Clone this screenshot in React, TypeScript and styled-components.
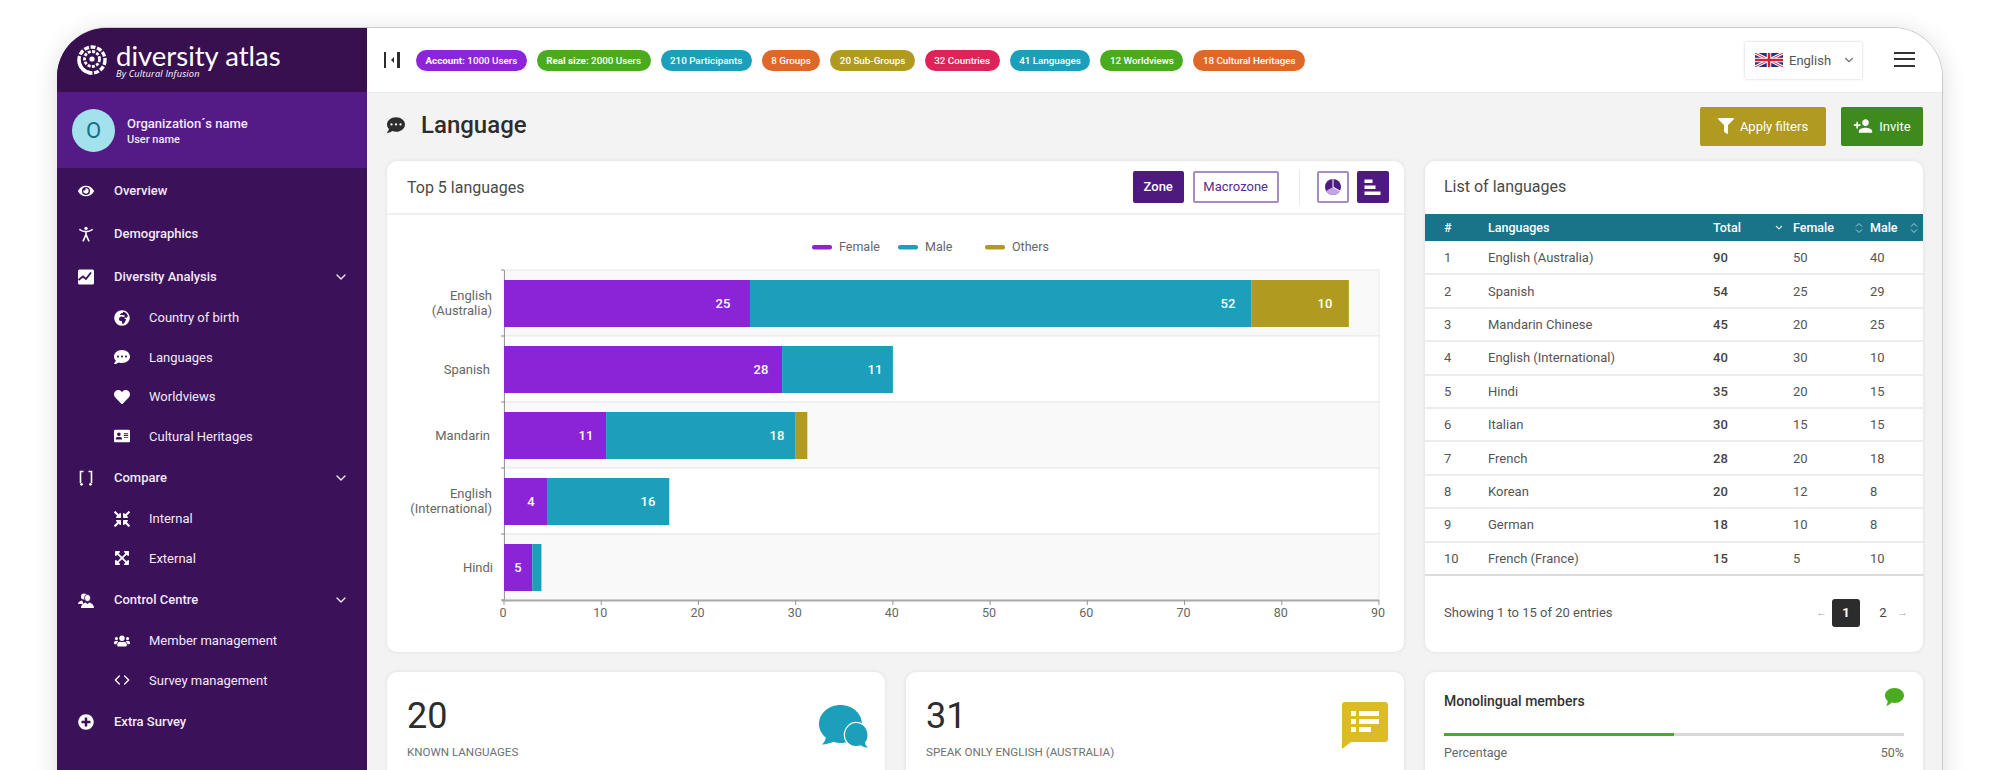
import React from 'react';
import styled, {createGlobalStyle} from 'styled-components';
import {
    FaEye, FaGlobeAfrica, FaCommentDots, FaHeart, FaAddressCard, FaCompressArrowsAlt,
    FaExpandArrowsAlt, FaUsers, FaPlusCircle, FaFilter,
} from 'react-icons/fa';
import {FiChevronDown, FiCode} from 'react-icons/fi';
import {MdPersonAdd} from 'react-icons/md';

const GlobalStyle = createGlobalStyle`
  html, body {
    margin: 0;
    height: 770px;
    overflow: hidden;
    background: #fff;
    font-family: Roboto, "Liberation Sans", sans-serif;
  }
`;

const Page = styled.div`
  height: 770px;
  overflow: hidden;
  padding: 27px 57px 0;
  box-sizing: border-box;
`;

const Frame = styled.div`
  display: flex;
  height: 800px;
  border: 1px solid #c9c9c9;
  border-left: 0;
  border-radius: 50px 50px 0 0;
  overflow: hidden;
  box-shadow: 0 4px 24px rgba(0, 0, 0, 0.14);
`;

const Sidebar = styled.aside`
  width: 310px;
  flex: none;
  background: #3b1159;
  color: #f3e9f8;
`;

const LogoBar = styled.div`
  height: 64px;
  display: flex;
  align-items: center;
  gap: 9px;
  padding-left: 20px;
  background: #38104f;
`;

const LogoText = styled.div`
  color: #fff;
  font-family: Lato, sans-serif;
  font-size: 27.5px;
  line-height: 27px;
  margin-top: 1px;

  small {
    display: block;
    font-family: "Open Sans", sans-serif;
    font-size: 9.2px;
    line-height: 10px;
    font-style: italic;
    letter-spacing: 0.2px;
  }
`;

const OrgBand = styled.div`
  height: 76px;
  display: flex;
  align-items: center;
  gap: 12px;
  padding-left: 15px;
  background: #541a85;
`;

const Avatar = styled.div`
  width: 43px;
  height: 43px;
  border-radius: 50%;
  background: #a3e1ec;
  color: #17707f;
  font-size: 22px;
  display: flex;
  align-items: center;
  justify-content: center;
`;

const OrgInfo = styled.div`
  margin-top: 3px;
`;

const OrgName = styled.div`
  font-size: 13px;
  font-weight: 500;
  line-height: 16px;
`;

const OrgUser = styled.div`
  font-size: 11px;
  font-weight: 500;
  line-height: 16px;
`;

const NavList = styled.nav`
  padding-top: 1px;
`;

const NavRow = styled.div<{ $sub?: boolean }>`
  height: ${props => props.$sub ? '39.5px' : '43px'};
  display: flex;
  align-items: center;
  padding-left: ${props => props.$sub ? '57px' : '21px'};
  font-size: 13px;
  font-weight: ${props => props.$sub ? 400 : 500};

  & > svg:first-child {
    width: 16px;
    height: 16px;
    margin-right: ${props => props.$sub ? '19px' : '20px'};
    color: #fff;
    flex: none;
  }
`;

const NavChevron = styled(FiChevronDown)`
  margin-left: auto;
  margin-right: 18px;
  width: 16px;
  height: 16px;
`;

const Main = styled.main`
  flex: 1;
  background: #f3f3f3;
  min-width: 0;
`;

const TopBar = styled.header`
  height: 64px;
  background: #fff;
  border-bottom: 1px solid #ebebeb;
  display: flex;
  align-items: center;
  padding-left: 17px;
`;

const Pills = styled.div`
  display: flex;
  gap: 10px;
  margin-left: 16px;
`;

const Pill = styled.span<{ $color: string }>`
  height: 21px;
  line-height: 21px;
  padding: 0 9.5px;
  border-radius: 11px;
  background: ${props => props.$color};
  color: #fff;
  font-size: 9.8px;
  font-weight: 500;
  white-space: nowrap;

  b {
    font-weight: 700;
  }
`;

const LangSelect = styled.div`
  margin-left: auto;
  width: 119px;
  height: 39px;
  box-sizing: border-box;
  border: 1px solid #ececec;
  border-radius: 3px;
  box-shadow: 0 0 3px rgba(0, 0, 0, 0.06);
  display: flex;
  align-items: center;
  gap: 6px;
  padding-left: 10px;
  font-size: 13px;
  color: #555;

  svg:last-child {
    margin-left: 5px;
    color: #777;
  }
`;

const Burger = styled.div`
  width: 21px;
  height: 15px;
  margin: 0 27px 2px 31px;
  border-top: 2px solid #333;
  border-bottom: 2px solid #333;
  box-sizing: border-box;
  position: relative;

  &::after {
    content: '';
    position: absolute;
    left: 0;
    right: 0;
    top: 4.5px;
    height: 2px;
    background: #333;
  }
`;

const Content = styled.div`
  padding: 0 19px 0 20px;
`;

const TitleRow = styled.div`
  height: 66px;
  padding-bottom: 2px;
  display: flex;
  align-items: center;
  gap: 15px;
`;

const PageTitle = styled.h1`
  flex: 1;
  display: flex;
  align-items: center;
  gap: 16px;
  margin: 0 0 2px;
  font-size: 24px;
  font-weight: 500;
  color: #2d2d2d;

  svg {
    width: 18px;
    height: 18px;
  }
`;

const ActionButton = styled.button<{ $color: string; $width: number }>`
  width: ${props => props.$width}px;
  height: 39px;
  border: 0;
  border-radius: 2px;
  background: ${props => props.$color};
  color: #fff;
  font-family: inherit;
  font-size: 13px;
  font-weight: 400;
  display: flex;
  align-items: center;
  justify-content: center;
  gap: 6px;
  padding: 0;
`;

const Grid = styled.div`
  display: grid;
  grid-template-columns: repeat(3, 1fr);
  column-gap: 21px;
  row-gap: 20px;
`;

const Card = styled.section<{ $wide?: boolean }>`
  grid-column: ${props => props.$wide ? 'span 2' : 'span 1'};
  background: #fff;
  border-radius: 10px;
  box-shadow: 0 0 4px rgba(0, 0, 0, 0.09);
  overflow: hidden;
`;

const TallCard = styled(Card)`
  height: 491px;
`;

const CardHead = styled.div`
  height: 52px;
  display: flex;
  align-items: center;
  padding: 0 15.5px 0 20px;
  border-bottom: 2px solid #f0f0f0;
  font-size: 16px;
  color: #4a4a4a;
`;

const CardTitle = styled.div`
  flex: 1;
`;

const ZoneButton = styled.div<{ $active?: boolean }>`
  height: 32px;
  line-height: 28px;
  box-sizing: border-box;
  padding: 0 ${props => props.$active ? '9px' : '8.5px'};
  margin-left: ${props => props.$active ? '0' : '9px'};
  border: 2px solid ${props => props.$active ? '#4f1a80' : '#a78cc2'};
  border-radius: 2px;
  background: ${props => props.$active ? '#4f1a80' : '#fff'};
  color: ${props => props.$active ? '#fff' : '#5a2a8a'};
  font-size: 13px;
  font-weight: ${props => props.$active ? 500 : 400};
`;

const HeadDivider = styled.div`
  width: 1px;
  height: 36px;
  background: #ececec;
  margin: 0 17px 0 20px;
`;

const IconButton = styled.div<{ $active?: boolean }>`
  width: 32px;
  height: 32px;
  margin-left: ${props => props.$active ? '8px' : '0'};
  box-sizing: border-box;
  border: 2px solid ${props => props.$active ? '#4f1a80' : '#a78cc2'};
  border-radius: 2px;
  background: ${props => props.$active ? '#4f1a80' : '#fff'};
  display: flex;
  align-items: center;
  justify-content: center;
`;

const ChartSvg = styled.svg`
  display: block;
  font-family: Roboto, sans-serif;
`;

const ListTitle = styled.div`
  height: 53px;
  line-height: 52px;
  padding-left: 19px;
  font-size: 16px;
  color: #4a4a4a;
`;

const Table = styled.table`
  width: 100%;
  table-layout: fixed;
  border-collapse: collapse;
  font-size: 13px;
  color: #555;
`;

const HeadCell = styled.th<{ $width: number }>`
  width: ${props => props.$width}px;
  height: 27px;
  padding: 0;
  background: #19748a;
  color: #fff;
  font-weight: 500;
  font-size: 12.5px;
  text-align: left;

  &:first-child {
    padding-left: 19px;
  }
`;

const HeadInner = styled.div<{ $pad: number }>`
  display: flex;
  align-items: center;
  justify-content: space-between;
  padding-right: ${props => props.$pad}px;
`;

const Row = styled.tr`
  height: 33.4px;
  border-bottom: 2px solid #ececec;

  td {
    padding: 0;
  }

  td:first-child {
    padding-left: 19px;
  }

  &:last-child {
    border-bottom-color: #dcdcdc;
  }
`;

const TotalCell = styled.td`
  font-weight: 500;
  color: #444;
`;

const TableFoot = styled.div`
  display: flex;
  align-items: center;
  padding: 23px 15px 0 19px;
  font-size: 13px;
  color: #555;
`;

const Pager = styled.div`
  margin-left: auto;
  display: flex;
  align-items: center;
  color: #aaa;
  font-size: 11px;
`;

const PageNum = styled.div<{ $active?: boolean }>`
  width: 28px;
  height: 28px;
  line-height: 28px;
  text-align: center;
  border-radius: 3px;
  margin: 0 ${props => props.$active ? '9px' : '0'} 0 ${props => props.$active ? '5px' : '0'};
  background: ${props => props.$active ? '#2c2c2c' : 'transparent'};
  color: ${props => props.$active ? '#fff' : '#444'};
  font-size: 13px;
  font-weight: ${props => props.$active ? 700 : 400};
`;

const StatCard = styled(Card)`
  height: 130px;
  display: flex;
  justify-content: space-between;
  padding: 21px 16px 0 20px;
  box-sizing: border-box;
`;

const StatValue = styled.div`
  font-size: 36px;
  line-height: 46px;
  color: #2d2d2d;
`;

const StatLabel = styled.div`
  margin-top: 6px;
  font-size: 11.6px;
  line-height: 14px;
  color: #707070;
  text-transform: uppercase;
`;

const StatIcon = styled.div<{ $top: number }>`
  margin-top: ${props => props.$top}px;
`;

const MonoCard = styled(Card)`
  height: 130px;
  padding: 16px 19px 0 19px;
  box-sizing: border-box;
`;

const MonoHead = styled.div`
  height: 32px;
  display: flex;
  justify-content: space-between;
  align-items: flex-start;
  font-size: 14px;
  font-weight: 500;
  line-height: 26px;
  color: #333;
`;

const Track = styled.div`
  margin-top: 13px;
  height: 3px;
  background: #d9d9d9;
`;

const TrackFill = styled.div<{ $value: number }>`
  width: ${props => props.$value}%;
  height: 100%;
  background: #4bab1e;
`;

const MonoMeta = styled.div`
  display: flex;
  justify-content: space-between;
  margin-top: 9px;
  font-size: 12.5px;
  color: #666;
`;

const pills = [
    {color: '#8e24d8', bold: 'Account:', text: ' 1000 Users'},
    {color: '#4bab1e', bold: 'Real size:', text: ' 2000 Users'},
    {color: '#1b9fba', text: '210 Participants'},
    {color: '#e0672a', text: '8 Groups'},
    {color: '#b09a1f', text: '20 Sub-Groups'},
    {color: '#dd2459', text: '32 Countries'},
    {color: '#1b9fba', text: '41 Languages'},
    {color: '#4bab1e', text: '12 Worldviews'},
    {color: '#e0672a', text: '18 Cultural Heritages'},
];

const languages = [
    ['English (Australia)', 90, 50, 40],
    ['Spanish', 54, 25, 29],
    ['Mandarin Chinese', 45, 20, 25],
    ['English (International)', 40, 30, 10],
    ['Hindi', 35, 20, 15],
    ['Italian', 30, 15, 15],
    ['French', 28, 20, 18],
    ['Korean', 20, 12, 8],
    ['German', 18, 10, 8],
    ['French (France)', 15, 5, 10],
];

const PURPLE = '#8b24d6';
const TEAL = '#1b9fba';
const GOLD = '#b09a1f';
const UNIT = 875 / 90;
const toX = (v: number) => 504 + v * UNIT;

// [end value, colour, label, label centre]
const bars: { top: number; parts: [number, string, string, number][] }[] = [
    {top: 280, parts: [[25.3, PURPLE, '25', 723], [76.9, TEAL, '52', 1228], [86.9, GOLD, '10', 1325]]},
    {top: 346, parts: [[28.6, PURPLE, '28', 761], [40, TEAL, '11', 875]]},
    {top: 412, parts: [[10.5, PURPLE, '11', 586], [30, TEAL, '18', 777], [31.2, GOLD, '', 0]]},
    {top: 478, parts: [[4.5, PURPLE, '4', 531], [17, TEAL, '16', 648]]},
    {top: 544, parts: [[2.9, PURPLE, '5', 518], [3.85, TEAL, '', 0]]},
];

const yLabels: [string, number, number][] = [
    ['English', 492, 300], ['(Australia)', 492, 315], ['Spanish', 490, 374], ['Mandarin', 490, 440],
    ['English', 492, 498], ['(International)', 492, 513], ['Hindi', 493, 572],
];

const legend: [string, string, number, number][] = [
    ['Female', PURPLE, 812, 839],
    ['Male', TEAL, 898, 925],
    ['Others', GOLD, 985, 1012],
];

const Chart = () => (
    <ChartSvg width="1017" height="437" viewBox="387 215 1017 437">
        {legend.map(([name, color, x, tx]) => (
            <g key={name}>
                <rect x={x} y={245} width={20} height={4.5} rx={2} fill={color} />
                <text x={tx} y={251} fontSize="12.5" fill="#666">{name}</text>
            </g>
        ))}
        {[0, 1, 2, 3, 4].map(i => (
            <rect key={i} x={504} y={270 + i * 66} width={875} height={66}
                  fill={i % 2 ? '#fff' : '#f9f9f9'} stroke="#e8e8e8" />
        ))}
        {[0, 1, 2, 3, 4, 5].map(i => (
            <line key={i} x1={501} x2={504} y1={270 + i * 66} y2={270 + i * 66} stroke="#888" />
        ))}
        <line x1={504.5} x2={504.5} y1={270} y2={601} stroke="#999" />
        <line x1={502} x2={1379} y1={600.5} y2={600.5} stroke="#aaa" strokeWidth="2" />
        {[0, 10, 20, 30, 40, 50, 60, 70, 80, 90].map(v => (
            <g key={v}>
                <line x1={toX(v)} x2={toX(v)} y1={600} y2={605} stroke="#999" />
                <text x={toX(v) - 1} y={617} fontSize="12.5" fill="#666" textAnchor="middle">{v}</text>
            </g>
        ))}
        {yLabels.map(([text, x, y]) => (
            <text key={text + y} x={x} y={y} fontSize="13" fill="#666" textAnchor="end">{text}</text>
        ))}
        {bars.map(bar => bar.parts.map(([end, color, label, cx], i) => {
            const from = i ? bar.parts[i - 1][0] : 0;
            return (
                <g key={color}>
                    <rect x={toX(from)} y={bar.top} width={(end - from) * UNIT} height={47} fill={color} />
                    {label && <text x={cx} y={bar.top + 28} fontSize="13" fontWeight="500" fill="#fff"
                                    textAnchor="middle">{label}</text>}
                </g>
            );
        }))}
    </ChartSvg>
);

const Logo = () => (
    <svg width="30" height="30" viewBox="0 0 30 30" fill="none" stroke="#fff">
        <circle cx="15" cy="15" r="13" strokeWidth="3.4" strokeDasharray="5 1.6" />
        <path d="M2 15a13 13 0 0 0 12 13" strokeWidth="3.4" />
        <circle cx="15" cy="14" r="7.5" strokeWidth="2.8" strokeDasharray="3 1.4" />
        <circle cx="15" cy="14" r="2.6" fill="#fff" stroke="none" />
    </svg>
);

const ChartBoxIcon = () => (
    <svg viewBox="0 0 16 16">
        <rect x="0" y="0.500" width="16" height="15" rx="1.5" fill="#fff" />
        <path d="M0.500 11l4.500-3.500 3 2.500L13 3.500" fill="none" stroke="#3b1159" strokeWidth="1.8" />
    </svg>
);

const PersonIcon = () => (
    <svg viewBox="0 0 24 24" fill="none" stroke="#fff" strokeWidth="2.4">
        <circle cx="12" cy="3.5" r="2.5" fill="#fff" stroke="none" />
        <path d="M2 5c4 3 6 3.500 10 3.500S18 8 22 5M12 8.500V13M12 13l-4.500 10M12 13l4.500 10" />
    </svg>
);

const CompareIcon = () => (
    <svg viewBox="0 0 16 16" fill="none" stroke="#fff" strokeWidth="1.6">
        <path d="M5.500 1.500H2.500V13M10.500 1.500h3V13" />
        <circle cx="3.500" cy="14.300" r="1.400" fill="#fff" stroke="none" />
        <circle cx="12.500" cy="14.300" r="1.400" fill="#fff" stroke="none" />
    </svg>
);

const BustsIcon = () => (
    <svg viewBox="0 0 16 16" fill="#fff">
        <circle cx="6" cy="4.500" r="3" />
        <path d="M0 12c0-2 2-3 4-3.500l1 1.500v2z" />
        <ellipse cx="9.500" cy="6" rx="3" ry="3.600" stroke="#3b1159" strokeWidth="0.8" />
        <path d="M3 16c0-3 2.500-5 4.500-5.500l2 1.500 2-1.500c2 .5 4.500 2.500 4.500 5.500z" />
    </svg>
);

const Flag = () => (
    <svg width="28" height="14" viewBox="0 0 28 14">
        <rect width="28" height="14" fill="#23317d" />
        <path d="M0 0l28 14M28 0L0 14" stroke="#fff" strokeWidth="3" />
        <path d="M0 0l28 14M28 0L0 14" stroke="#d41f3c" strokeWidth="1" />
        <path d="M14 0v14M0 7h28" stroke="#fff" strokeWidth="4.500" />
        <path d="M14 0v14M0 7h28" stroke="#d41f3c" strokeWidth="2.500" />
    </svg>
);

const SidebarToggle = () => (
    <svg width="16" height="16" viewBox="0 0 16 16" fill="#2d2d2d">
        <rect x="0" y="0" width="2" height="16" />
        <rect x="13" y="0" width="3" height="16" />
        <path d="M10 5v6L7 8z" />
    </svg>
);

const PieIcon = () => (
    <svg width="18" height="18" viewBox="0 0 18 18">
        <circle cx="9" cy="9" r="8" fill="#4f1a80" />
        <path d="M9 9l6.900 4A8 8 0 0 1 2 13z" fill="#c3a5e4" />
        <path d="M9 1v8l6.900 4" fill="none" stroke="#fff" strokeWidth="1" />
    </svg>
);

const BarsIcon = () => (
    <svg width="17" height="17" viewBox="0 0 17 17" fill="#fff">
        <rect x="0.500" y="0.500" width="8" height="3.500" />
        <rect x="0.500" y="6.500" width="11" height="3.500" />
        <rect x="0.500" y="12.500" width="16" height="3.500" />
    </svg>
);

const SortCaret = () => (
    <svg width="8" height="12" viewBox="0 0 8 12" fill="none" stroke="#9fd0da" strokeWidth="1">
        <path d="M1 4.500l3-3 3 3M1 7.500l3 3 3-3" />
    </svg>
);

const SortDown = () => (
    <svg width="8" height="6" viewBox="0 0 8 6" fill="none" stroke="#cfe7ec" strokeWidth="1.200">
        <path d="M1 1l3 3 3-3" />
    </svg>
);

const ChatsIcon = () => (
    <svg width="50" height="43" viewBox="0 0 50 43" fill="#1b9fba">
        <path d="M21.500 0C33.400 0 43 8.500 43 19s-9.600 19-21.500 19c-2.500 0-4.800-.4-7-1.200C11.500 38 7.500 39.500 3 39.500c2-1.800 3.500-4.300 3.800-7C2.600 29 0 24.300 0 19 0 8.500 9.600 0 21.500 0z" />
        <path d="M37 18c6.500 0 11.500 5.500 11.500 12 0 3.200-1 5.700-2.700 7.800.3 1.800 1.500 3.500 3.200 4.700-2.800 0-5.300-.8-7.200-2.300-1.500.6-3 .8-4.800.8-6.200 0-11-5-11-11S30.800 18 37 18z"
              stroke="#fff" strokeWidth="2.500" paintOrder="stroke" />
    </svg>
);

const ListBubbleIcon = () => (
    <svg width="46" height="47" viewBox="0 0 46 47">
        <path d="M3 0h40a3 3 0 0 1 3 3v34a3 3 0 0 1-3 3H9l-9 7V3a3 3 0 0 1 3-3z" fill="#dcbc22" />
        <g fill="#fff">
            <rect x="9" y="9" width="5" height="5" />
            <rect x="17" y="9" width="20" height="5" />
            <rect x="9" y="17" width="5" height="5" />
            <rect x="17" y="17" width="20" height="5" />
            <rect x="9" y="25" width="5" height="5" />
            <rect x="17" y="25" width="12" height="5" />
        </g>
    </svg>
);

const GreenBubble = () => (
    <svg width="19" height="18" viewBox="0 0 19 18" fill="#4bab1e">
        <path d="M9.500 0C14.700 0 19 3.300 19 7.500S14.700 15 9.500 15c-1 0-2-.1-3-.4C5 16.300 3 17.500 1 18c1-1.300 1.500-3 1.700-5C1 11.500 0 9.600 0 7.500 0 3.300 4.300 0 9.500 0z" />
    </svg>
);

const App = () => {
    return (
        <Page>
            <GlobalStyle />
            <Frame>
                <Sidebar>
                    <LogoBar>
                        <Logo />
                        <LogoText>
                            diversity atlas
                            <small>By Cultural Infusion</small>
                        </LogoText>
                    </LogoBar>
                    <OrgBand>
                        <Avatar>O</Avatar>
                        <OrgInfo>
                            <OrgName>Organization´s name</OrgName>
                            <OrgUser>User name</OrgUser>
                        </OrgInfo>
                    </OrgBand>
                    <NavList>
                        <NavRow><FaEye />Overview</NavRow>
                        <NavRow><PersonIcon />Demographics</NavRow>
                        <NavRow><ChartBoxIcon />Diversity Analysis<NavChevron /></NavRow>
                        <NavRow $sub><FaGlobeAfrica />Country of birth</NavRow>
                        <NavRow $sub><FaCommentDots />Languages</NavRow>
                        <NavRow $sub><FaHeart />Worldviews</NavRow>
                        <NavRow $sub><FaAddressCard />Cultural Heritages</NavRow>
                        <NavRow><CompareIcon />Compare<NavChevron /></NavRow>
                        <NavRow $sub><FaCompressArrowsAlt />Internal</NavRow>
                        <NavRow $sub><FaExpandArrowsAlt />External</NavRow>
                        <NavRow><BustsIcon />Control Centre<NavChevron /></NavRow>
                        <NavRow $sub><FaUsers />Member management</NavRow>
                        <NavRow $sub><FiCode />Survey management</NavRow>
                        <NavRow><FaPlusCircle />Extra Survey</NavRow>
                    </NavList>
                </Sidebar>
                <Main>
                    <TopBar>
                        <SidebarToggle />
                        <Pills>
                            {pills.map(pill => (
                                <Pill key={pill.text} $color={pill.color}>
                                    {pill.bold && <b>{pill.bold}</b>}{pill.text}
                                </Pill>
                            ))}
                        </Pills>
                        <LangSelect>
                            <Flag />
                            English
                            <FiChevronDown size={14} />
                        </LangSelect>
                        <Burger />
                    </TopBar>
                    <Content>
                        <TitleRow>
                            <PageTitle><FaCommentDots />Language</PageTitle>
                            <ActionButton $color="#b09a1f" $width={126}><FaFilter size={16} />Apply filters</ActionButton>
                            <ActionButton $color="#3e8a1c" $width={82}><MdPersonAdd size={20} />Invite</ActionButton>
                        </TitleRow>
                        <Grid>
                            <TallCard $wide>
                                <CardHead>
                                    <CardTitle>Top 5 languages</CardTitle>
                                    <ZoneButton $active>Zone</ZoneButton>
                                    <ZoneButton>Macrozone</ZoneButton>
                                    <HeadDivider />
                                    <IconButton><PieIcon /></IconButton>
                                    <IconButton $active><BarsIcon /></IconButton>
                                </CardHead>
                                <Chart />
                            </TallCard>
                            <TallCard>
                                <ListTitle>List of languages</ListTitle>
                                <Table>
                                    <thead>
                                        <tr>
                                            <HeadCell $width={44}>#</HeadCell>
                                            <HeadCell $width={225}>Languages</HeadCell>
                                            <HeadCell $width={80}><HeadInner $pad={10}>Total<SortDown /></HeadInner></HeadCell>
                                            <HeadCell $width={77}><HeadInner $pad={7}>Female<SortCaret /></HeadInner></HeadCell>
                                            <HeadCell $width={53}><HeadInner $pad={5}>Male<SortCaret /></HeadInner></HeadCell>
                                        </tr>
                                    </thead>
                                    <tbody>
                                        {languages.map((row, i) => (
                                            <Row key={i}>
                                                <td>{i + 1}</td>
                                                <td>{row[0]}</td>
                                                <TotalCell>{row[1]}</TotalCell>
                                                <td>{row[2]}</td>
                                                <td>{row[3]}</td>
                                            </Row>
                                        ))}
                                    </tbody>
                                </Table>
                                <TableFoot>
                                    Showing 1 to 15 of 20 entries
                                    <Pager>
                                        ←
                                        <PageNum $active>1</PageNum>
                                        <PageNum>2</PageNum>
                                        →
                                    </Pager>
                                </TableFoot>
                            </TallCard>
                            <StatCard>
                                <div>
                                    <StatValue>20</StatValue>
                                    <StatLabel>Known languages</StatLabel>
                                </div>
                                <StatIcon $top={12}><ChatsIcon /></StatIcon>
                            </StatCard>
                            <StatCard>
                                <div>
                                    <StatValue>31</StatValue>
                                    <StatLabel>Speak only English (Australia)</StatLabel>
                                </div>
                                <StatIcon $top={9}><ListBubbleIcon /></StatIcon>
                            </StatCard>
                            <MonoCard>
                                <MonoHead>Monolingual members<GreenBubble /></MonoHead>
                                <Track><TrackFill $value={50} /></Track>
                                <MonoMeta><span>Percentage</span><span>50%</span></MonoMeta>
                            </MonoCard>
                        </Grid>
                    </Content>
                </Main>
            </Frame>
        </Page>
    );
};

export default App;
